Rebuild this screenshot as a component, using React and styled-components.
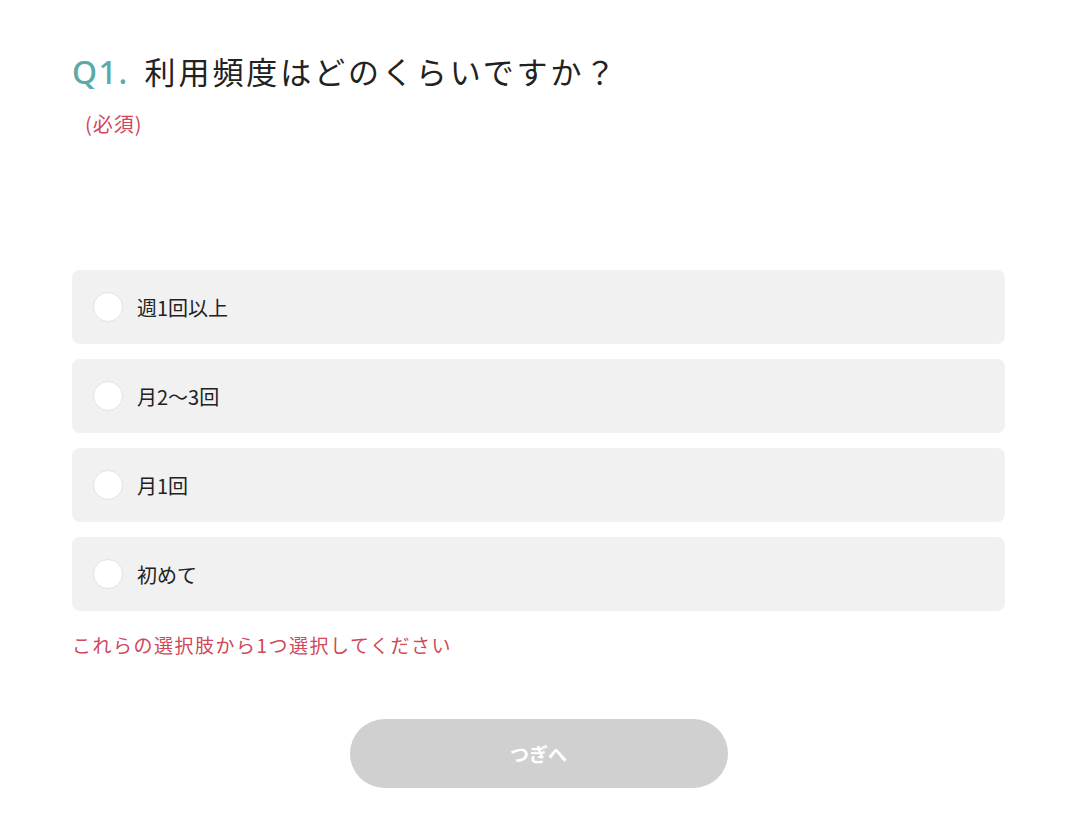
import React from "react";
import styled, { createGlobalStyle } from "styled-components";

const Global = createGlobalStyle`
  html, body { margin: 0; padding: 0; background: #fff; }
  body { font-family: "Noto Sans CJK JP", "Noto Sans", sans-serif; color: #222; }
`;

const Page = styled.main`
  width: 933px;
  padding: 48px 0 40px 72px;
  display: flex;
  flex-direction: column;
`;

const Title = styled.h1`
  margin: 0;
  font-size: 31px;
  font-weight: 400;
  letter-spacing: 2.9px;
  line-height: 46px;
  color: #222;
  display: flex;
  align-items: baseline;
`;

const QNum = styled.span`
  color: #5aaaa8;
  font-family: "Noto Sans", sans-serif;
  font-size: 32px;
  font-weight: 500;
  margin-right: 16px;
  letter-spacing: 1.5px;
`;

const Required = styled.span`
  color: #d0485a;
  font-size: 20px;
  letter-spacing: 1px;
  line-height: 30px;
  margin: 14px 0 0 13px;
`;

const Options = styled.div`
  margin-top: 131px;
  display: flex;
  flex-direction: column;
  gap: 15px;
`;

const Option = styled.label`
  display: flex;
  align-items: center;
  gap: 14px;
  height: 74px;
  padding: 0 21px;
  background: #f1f1f1;
  border-radius: 8px;
  cursor: pointer;
  font-size: 20px;
  color: #222;
`;

const Radio = styled.span`
  width: 30px;
  height: 30px;
  border-radius: 50%;
  background: #fff;
  border: 1px solid #e2e2e2;
  box-sizing: border-box;
  flex: none;
`;

const ErrorText = styled.p`
  margin: 19px 0 0;
  color: #d0485a;
  font-size: 19px;
  letter-spacing: 1.5px;
  line-height: 30px;
`;

const ButtonRow = styled.div`
  display: flex;
  justify-content: center;
  margin-top: 59px;
`;

const NextButton = styled.button`
  width: 378px;
  height: 69px;
  border: none;
  border-radius: 35px;
  background: #d0d0d0;
  color: #fff;
  font-family: inherit;
  font-size: 19px;
  font-weight: 700;
`;

const choices = ["週1回以上", "月2〜3回", "月1回", "初めて"];

export default function App() {
  return (
    <>
      <Global />
      <Page>
        <Title>
          <QNum>Q1.</QNum>
          利用頻度はどのくらいですか？
        </Title>
        <Required>(必須)</Required>
        <Options>
          {choices.map((c) => (
            <Option key={c}>
              <Radio />
              {c}
            </Option>
          ))}
        </Options>
        <ErrorText>これらの選択肢から1つ選択してください</ErrorText>
        <ButtonRow>
          <NextButton disabled>つぎへ</NextButton>
        </ButtonRow>
      </Page>
    </>
  );
}
